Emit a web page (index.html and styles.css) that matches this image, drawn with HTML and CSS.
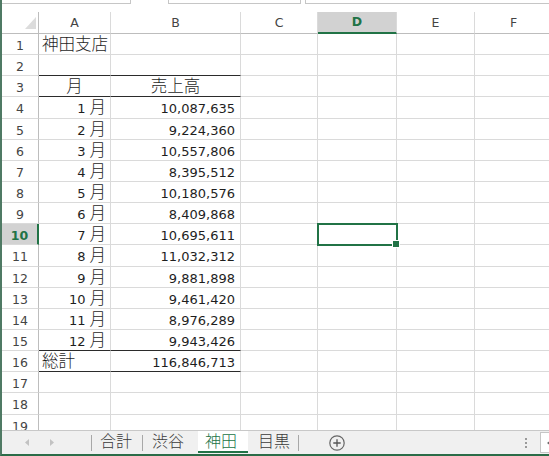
FILE: index.html
```html
<!DOCTYPE html>
<html lang="ja">
<head>
<meta charset="utf-8">
<title>神田支店</title>
<link rel="stylesheet" href="styles.css">
</head>
<body>
<div class="app">
  <div class="topbar">
    <div class="box b1"></div>
    <div class="box b2"></div>
    <div class="box b3"></div>
  </div>
  <div class="sheet">
    <div class="grid">
      <div class="c corner"><svg width="11" height="12" viewBox="0 0 11 12"><polygon points="11,0 11,12 0,12" fill="#dcdcdc"/></svg></div>
      <div class="c ch">A</div><div class="c ch">B</div><div class="c ch">C</div><div class="c ch on">D</div><div class="c ch">E</div><div class="c ch">F</div>

      <div class="c rh">1</div><div class="c l"><span class="k">神田支店</span></div><div class="c"></div><div class="c"></div><div class="c"></div><div class="c"></div><div class="c"></div>
      <div class="c rh">2</div><div class="c bb"></div><div class="c bb"></div><div class="c"></div><div class="c"></div><div class="c"></div><div class="c"></div>
      <div class="c rh">3</div><div class="c m bb"><span class="k">月</span></div><div class="c m bb"><span class="k">売上高</span></div><div class="c"></div><div class="c"></div><div class="c"></div><div class="c"></div>
      <div class="c rh">4</div><div class="c mr">1<span class="k mo">月</span></div><div class="c r">10,087,635</div><div class="c"></div><div class="c"></div><div class="c"></div><div class="c"></div>
      <div class="c rh">5</div><div class="c mr">2<span class="k mo">月</span></div><div class="c r">9,224,360</div><div class="c"></div><div class="c"></div><div class="c"></div><div class="c"></div>
      <div class="c rh">6</div><div class="c mr">3<span class="k mo">月</span></div><div class="c r">10,557,806</div><div class="c"></div><div class="c"></div><div class="c"></div><div class="c"></div>
      <div class="c rh">7</div><div class="c mr">4<span class="k mo">月</span></div><div class="c r">8,395,512</div><div class="c"></div><div class="c"></div><div class="c"></div><div class="c"></div>
      <div class="c rh">8</div><div class="c mr">5<span class="k mo">月</span></div><div class="c r">10,180,576</div><div class="c"></div><div class="c"></div><div class="c"></div><div class="c"></div>
      <div class="c rh">9</div><div class="c mr">6<span class="k mo">月</span></div><div class="c r">8,409,868</div><div class="c"></div><div class="c"></div><div class="c"></div><div class="c"></div>
      <div class="c rh on">10</div><div class="c mr">7<span class="k mo">月</span></div><div class="c r">10,695,611</div><div class="c"></div><div class="c"></div><div class="c"></div><div class="c"></div>
      <div class="c rh">11</div><div class="c mr">8<span class="k mo">月</span></div><div class="c r">11,032,312</div><div class="c"></div><div class="c"></div><div class="c"></div><div class="c"></div>
      <div class="c rh">12</div><div class="c mr">9<span class="k mo">月</span></div><div class="c r">9,881,898</div><div class="c"></div><div class="c"></div><div class="c"></div><div class="c"></div>
      <div class="c rh">13</div><div class="c mr">10<span class="k mo">月</span></div><div class="c r">9,461,420</div><div class="c"></div><div class="c"></div><div class="c"></div><div class="c"></div>
      <div class="c rh">14</div><div class="c mr">11<span class="k mo">月</span></div><div class="c r">8,976,289</div><div class="c"></div><div class="c"></div><div class="c"></div><div class="c"></div>
      <div class="c rh">15</div><div class="c mr bb">12<span class="k mo">月</span></div><div class="c r bb">9,943,426</div><div class="c"></div><div class="c"></div><div class="c"></div><div class="c"></div>
      <div class="c rh">16</div><div class="c l bb"><span class="k">総計</span></div><div class="c r bb">116,846,713</div><div class="c"></div><div class="c"></div><div class="c"></div><div class="c"></div>
      <div class="c rh">17</div><div class="c"></div><div class="c"></div><div class="c"></div><div class="c"></div><div class="c"></div><div class="c"></div>
      <div class="c rh">18</div><div class="c"></div><div class="c"></div><div class="c"></div><div class="c"></div><div class="c"></div><div class="c"></div>
      <div class="c rh">19</div><div class="c"></div><div class="c"></div><div class="c"></div><div class="c"></div><div class="c"></div><div class="c"></div>
    </div>
    <div class="selbox"></div>
    <div class="handle"></div>
  </div>
  <div class="tabbar">
    <div class="nav">
      <svg width="4" height="7" viewBox="0 0 4 7"><polygon points="4,0 4,7 0,3.5" fill="#c2c2c2"/></svg>
      <svg width="4" height="7" viewBox="0 0 4 7"><polygon points="0,0 0,7 4,3.5" fill="#c2c2c2"/></svg>
    </div>
    <div class="sep"></div>
    <div class="tab t1">合計</div>
    <div class="sep"></div>
    <div class="tab t2">渋谷</div>
    <div class="tab t3">神田</div>
    <div class="tab t4">目黒</div>
    <div class="sep"></div>
    <div class="add"><svg width="16" height="16" viewBox="0 0 16 16"><circle cx="8" cy="8" r="7.2" fill="none" stroke="#666" stroke-width="1.2"/><path d="M8 4.3v7.4M4.3 8h7.4" stroke="#555" stroke-width="1.3"/></svg></div>
    <div class="spacer"></div>
    <div class="dots"><i></i><i></i><i></i></div>
    <div class="hscroll"><svg width="4" height="6" viewBox="0 0 4 6"><polygon points="4,0 4,6 0,3" fill="#666"/></svg></div>
  </div>
</div>
</body>
</html>
```

FILE: styles.css
```css
* { box-sizing: border-box; }
html, body { margin: 0; padding: 0; }
body {
  width: 549px;
  height: 456px;
  overflow: hidden;
  background: #fff;
  color: #222;
  font-family: "DejaVu Sans", "Noto Sans CJK JP", sans-serif;
}
.app {
  width: 549px;
  height: 456px;
  display: flex;
  flex-direction: column;
  border-left: 2px solid #4f7a64;
  border-bottom: 2px solid #2b6c48;
  overflow: hidden;
}
.topbar { height: 12px; flex: none; display: flex; align-items: flex-start; }
.box { height: 4px; background: #fff; border: 1px solid #c6c6c6; border-top: 0; }
.b1 { width: 129px; border-left: 0; }
.b2 { width: 133px; margin-left: 37px; }
.b3 { flex: 1; margin-left: 4px; border-right: 0; }

.sheet { position: relative; height: 418px; flex: none; overflow: hidden; }
.grid {
  display: grid;
  grid-template-columns: 37px 72px 130px 77px 79px 78px 78px;
  grid-template-rows: 22px repeat(19, 21.15px);
  width: 551px;
}
.c {
  display: block;
  min-width: 0;
  white-space: nowrap;
  padding: 4px 4px 0;
  font-size: 13px;
  line-height: 16px;
  color: #1e1e1e;
  border-right: 1px solid #dadada;
  border-bottom: 1px solid #dadada;
}
.k {
  font-family: "Noto Sans CJK JP", sans-serif;
  font-size: 16.5px;
  font-weight: 300;
  line-height: 0;
}
.l { padding-left: 3px; text-align: left; }
.m { text-align: center; }
.r { text-align: right; padding-right: 5px; }
.mr { text-align: right; padding-right: 4px; }
.mo { margin-left: 4px; }
.bb { border-bottom-color: #2b2b2b; }

.corner { position: relative; border-right-color: #bdbdbd; border-bottom-color: #bdbdbd; }
.corner svg { position: absolute; right: 2px; bottom: 4px; }
.ch {
  display: flex;
  justify-content: center;
  align-items: center;
  padding: 0;
  font-size: 12.5px;
  color: #444;
  border-bottom-color: #bdbdbd;
}
.ch.on {
  background: #d2d2d2;
  color: #217346;
  font-weight: bold;
  border-bottom: 2px solid #217346;
}
.rh {
  text-align: center;
  padding: 4px 0 0;
  font-size: 12.5px;
  color: #444;
  border-right-color: #bdbdbd;
}
.rh.on {
  background: #d2d2d2;
  color: #217346;
  font-weight: bold;
  border-right: 2px solid #217346;
}

.selbox {
  position: absolute;
  left: 315px;
  top: 211px;
  width: 81px;
  height: 23px;
  border: 2px solid #217346;
}
.handle {
  position: absolute;
  left: 391px;
  top: 229px;
  width: 6px;
  height: 6px;
  background: #217346;
  box-shadow: 0 0 0 1px #fff;
}

.tabbar {
  height: 24px;
  flex: none;
  display: flex;
  align-items: stretch;
  background: #f0f0f0;
  border-top: 1px solid #c8c8c8;
}
.nav { width: 89px; flex: none; display: flex; align-items: center; gap: 21px; padding-left: 23px; }
.sep { width: 1px; height: 16px; flex: none; align-self: center; background: #a8a8a8; }
.tab {
  flex: none;
  font-family: "Noto Sans CJK JP", sans-serif;
  font-size: 16px;
  font-weight: 300;
  line-height: 16px;
  padding-top: 1px;
  color: #3a3a3a;
}
.t1 { width: 50px; padding-left: 8px; }
.t2 { width: 55px; padding-left: 9px; }
.t3 {
  width: 50px;
  height: 22px;
  padding-left: 7px;
  background: #fff;
  color: #217346;
  border-bottom: 2px solid #217346;
}
.t4 { width: 50px; padding-left: 10px; }
.add { flex: none; width: 16px; height: 16px; margin-left: 30px; align-self: center; display: flex; }
.spacer { flex: 1; }
.dots { flex: none; display: flex; flex-direction: column; gap: 2px; align-self: center; margin-right: 13px; }
.dots i { display: block; width: 2px; height: 2px; background: #9a9a9a; }
.hscroll {
  flex: none;
  width: 9px;
  height: 21px;
  margin-top: 1px;
  background: #fff;
  border: 1px solid #c6c6c6;
  border-right: 0;
  display: flex;
  align-items: center;
  padding-left: 6px;
}
```
